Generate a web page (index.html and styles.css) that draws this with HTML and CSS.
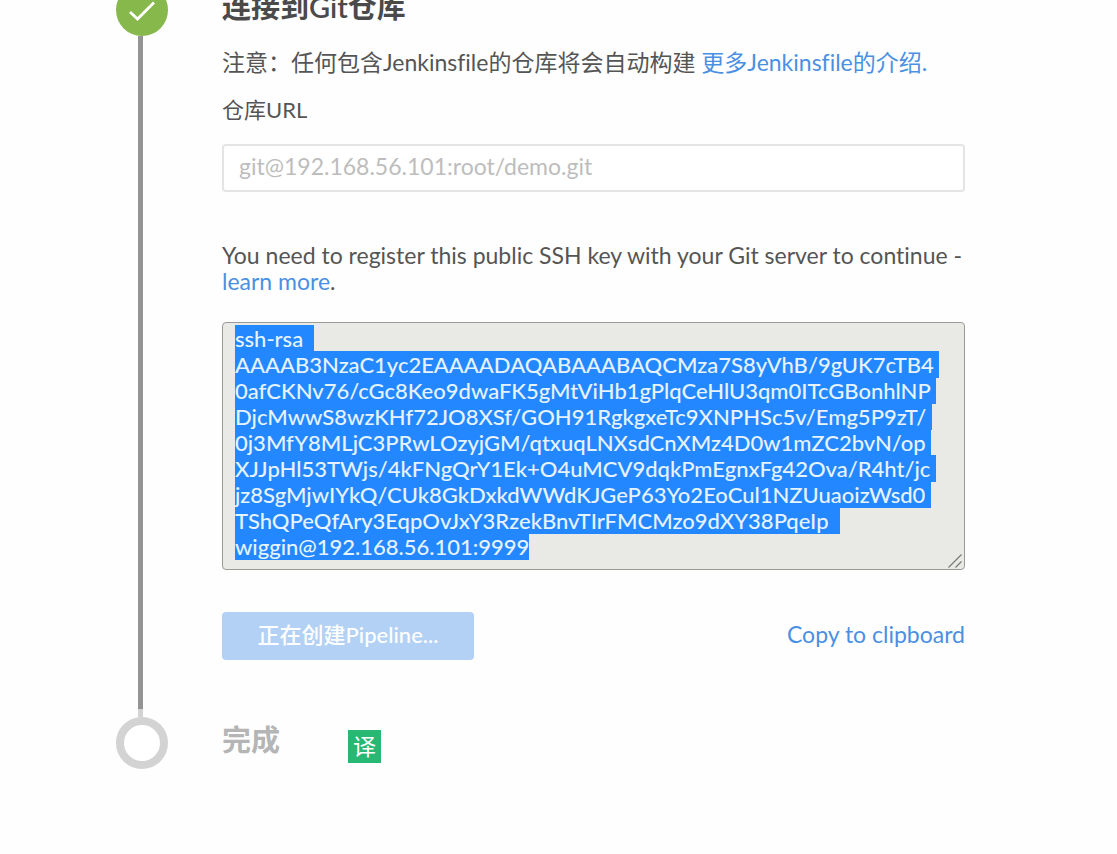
FILE: index.html
```
<!DOCTYPE html>
<html lang="zh-CN">
<head>
<meta charset="utf-8">
<meta name="viewport" content="width=device-width, initial-scale=1">
<title>创建 Pipeline</title>
<link rel="stylesheet" href="styles.css">
</head>
<body>
<main class="steps">
  <section class="step step-done">
    <div class="rail">
      <svg class="marker" viewBox="0 0 52 52" aria-hidden="true">
        <circle cx="26" cy="26" r="26" fill="#86b84b"/>
        <path d="M14 28 L21.5 35 L38 18.5" fill="none" stroke="#fff" stroke-width="2.8"/>
      </svg>
      <div class="line"></div>
    </div>
    <div class="body">
      <h2 class="title">连接到Git仓库</h2>
      <p class="note">注意：任何包含Jenkinsfile的仓库将会自动构建 <a href="#">更多Jenkinsfile的介绍.</a></p>
      <label class="label" for="repo">仓库URL</label>
      <input class="field" id="repo" type="text" placeholder="git@192.168.56.101:root/demo.git">
      <label class="hint" for="key">You need to register this public SSH key with your Git server to continue - <a href="#">learn more</a>.</label>
      <div class="key-box">
        <textarea class="key" id="key" readonly spellcheck="false">ssh-rsa 
AAAAB3NzaC1yc2EAAAADAQABAAABAQCMza7S8yVhB/9gUK7cTB4
0afCKNv76/cGc8Keo9dwaFK5gMtViHb1gPlqCeHlU3qm0ITcGBonhlNP
DjcMwwS8wzKHf72JO8XSf/GOH91RgkgxeTc9XNPHSc5v/Emg5P9zT/
0j3MfY8MLjC3PRwLOzyjGM/qtxuqLNXsdCnXMz4D0w1mZC2bvN/op
XJJpHl53TWjs/4kFNgQrY1Ek+O4uMCV9dqkPmEgnxFg42Ova/R4ht/jc
jz8SgMjwIYkQ/CUk8GkDxkdWWdKJGeP63Yo2EoCul1NZUuaoizWsd0
TShQPeQfAry3EqpOvJxY3RzekBnvTIrFMCMzo9dXY38PqeIp 
wiggin@192.168.56.101:9999</textarea>
        <svg class="grip" viewBox="0 0 14 14" aria-hidden="true">
          <path d="M0.5 13.5 L13.5 0.5 M7.5 13.5 L13.5 7.5" fill="none" stroke="#777" stroke-width="1.2"/>
        </svg>
      </div>
      <div class="actions">
        <button class="create" type="button" disabled>正在创建Pipeline...</button>
        <a class="copy" href="#">Copy to clipboard</a>
      </div>
    </div>
  </section>
  <section class="step step-next">
    <div class="rail">
      <svg class="marker" viewBox="0 0 52 52" aria-hidden="true">
        <circle cx="26" cy="26" r="22" fill="#fff" stroke="#d3d3d3" stroke-width="8"/>
      </svg>
    </div>
    <div class="body finish">
      <h2 class="title">完成</h2>
      <button class="translate" type="button">译</button>
    </div>
  </section>
</main>
<script src="script.js"></script>
</body>
</html>
```
FILE: styles.css
```
* {
  box-sizing: border-box;
}

body {
  margin: 0;
  background: #fefefe;
  color: #555;
  font-family: Lato, "Noto Sans CJK SC", sans-serif;
  font-size: 23px;
  font-variant-ligatures: none;
  line-height: 26px;
  overflow-x: hidden;
}

a {
  color: #4a90e2;
  text-decoration: none;
}

.steps {
  margin-top: -16px;
  padding: 0 152px 0 116px;
}

.step {
  display: flex;
  gap: 54px;
}

.rail {
  display: flex;
  flex: none;
  flex-direction: column;
  align-items: center;
  width: 52px;
}

.marker {
  display: block;
  flex: none;
  width: 52px;
  height: 52px;
}

.line {
  flex: 1;
  width: 5px;
  margin-right: 3px;
  background: #949494;
  border-bottom: 8px solid #d3d3d3;
}

.body {
  display: flex;
  flex: 1;
  flex-direction: column;
  min-width: 0;
}

.title {
  margin: 0;
  color: #4a4a4a;
  font-size: 29px;
  font-weight: 600;
  line-height: 46px;
}

.note {
  margin: 19px 0 22px;
}

.label {
  margin-bottom: 21px;
  font-size: 22px;
}

.field {
  width: 100%;
  height: 48px;
  padding: 0 15px 4px;
  border: 2px solid #e4e4e4;
  border-radius: 4px;
  background: #fff;
  color: inherit;
  font: inherit;
}

.field::placeholder {
  color: #bdbdbd;
  opacity: 1;
}

.hint {
  margin: 50px 0 28px;
}

.key-box {
  position: relative;
}

.key {
  display: block;
  width: 100%;
  height: 248px;
  padding: 3px 6px 6px 12px;
  border: 1px solid #999b96;
  border-radius: 4px;
  outline: none;
  background: #e9eae5;
  color: #4a4a4a;
  font: inherit;
  font-size: 22px;
  font-weight: 500;
  overflow: hidden;
  resize: none;
}

.key::selection {
  background: rgba(34, 136, 255, 0.996);
  color: #e6f3ff;
}

.grip {
  position: absolute;
  right: 3px;
  bottom: 2px;
  width: 14px;
  height: 14px;
}

.actions {
  display: flex;
  align-items: center;
  justify-content: space-between;
  margin: 42px 0 57px;
}

.create {
  width: 252px;
  height: 48px;
  padding: 0 0 2px;
  border: 0;
  border-radius: 4px;
  background: #b3d1f4;
  color: #fff;
  font: inherit;
  font-size: 22px;
  font-weight: 500;
}

.copy {
  padding-bottom: 4px;
}

.finish {
  flex-direction: row;
  align-items: flex-start;
  gap: 68px;
}

.step-next .title {
  color: #b5b5b5;
}

.translate {
  width: 33px;
  height: 33px;
  margin-top: 13px;
  padding: 0 0 2px;
  border: 0;
  background: #27b873;
  color: #fff;
  font: inherit;
}
```
FILE: script.js
```
const key = document.getElementById("key");
key.focus({ preventScroll: true });
key.select();
```
